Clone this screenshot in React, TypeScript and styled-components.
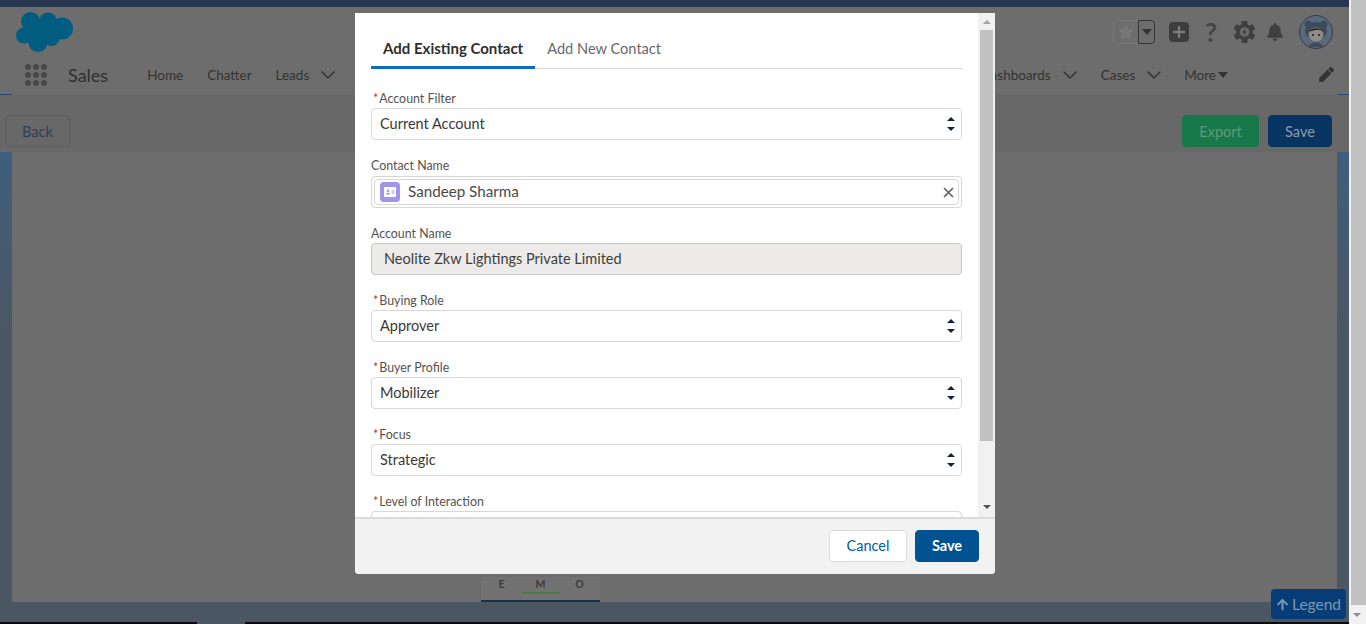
import React from 'react';
import styled, { createGlobalStyle } from 'styled-components';
import { ChevronDown } from 'lucide-react';
import { FaBell, FaPen, FaArrowUp } from 'react-icons/fa';

const FONT = `Lato, "Open Sans", "Liberation Sans", sans-serif`;

const GlobalStyle = createGlobalStyle`
  html, body {
    margin: 0;
    padding: 0;
    width: 1366px;
    height: 624px;
    overflow: hidden;
    font-family: ${FONT};
  }
  * { box-sizing: border-box; }
`;

const Page = styled.div`
  position: relative;
  width: 1366px;
  height: 624px;
  display: flex;
  overflow: hidden;
  background: #6e6d6d;
`;

const MainColumn = styled.div`
  width: 1349px;
  height: 624px;
  display: flex;
  flex-direction: column;
`;

const TopStrip = styled.div`
  height: 7px;
  background: #27364f;
`;

const Header = styled.header`
  height: 51px;
  display: flex;
  align-items: flex-start;
  justify-content: space-between;
  padding: 5px 16px 0 16px;
`;

const Logo = styled.svg`
  width: 57px;
  height: 40px;
  display: block;
`;

const HeaderTools = styled.div`
  display: flex;
  align-items: center;
  height: 40px;
`;

const FavouriteBox = styled.div`
  width: 42px;
  height: 24px;
  display: flex;
  border: 1px solid #7a7979;
  border-radius: 4px;
  margin-right: 14px;
`;

const FavouriteStar = styled.div`
  width: 24px;
  display: flex;
  align-items: center;
  justify-content: center;
`;

const FavouriteCaret = styled.div`
  flex: 1;
  display: flex;
  align-items: center;
  justify-content: center;
  border: 1px solid #333;
  border-radius: 0 4px 4px 0;
  margin: -1px -1px -1px 0;
  &::after {
    content: '';
    border-left: 5px solid transparent;
    border-right: 5px solid transparent;
    border-top: 6px solid #333;
  }
`;

const PlusBox = styled.div`
  width: 20px;
  height: 20px;
  border-radius: 4px;
  background: #3d3d3d;
  color: #7c7b7b;
  display: flex;
  align-items: center;
  justify-content: center;
  margin-right: 15px;
`;

const HelpMark = styled.span`
  width: 14px;
  margin-right: 16px;
  color: #454545;
  font-size: 26px;
  line-height: 26px;
  font-weight: 700;
  text-align: center;
`;

const ToolIcon = styled.span<{ $gap: number }>`
  display: flex;
  color: #3f3f3f;
  margin-right: ${(p) => p.$gap}px;
`;

const Avatar = styled.svg`
  width: 34px;
  height: 34px;
  display: block;
`;

const NavBar = styled.nav`
  height: 36px;
  display: flex;
  align-items: center;
  justify-content: space-between;
  padding: 0 15px 3px 25px;
  color: #333;
`;

const NavGroup = styled.div`
  display: flex;
  align-items: center;
`;

const Launcher = styled.div`
  display: grid;
  grid-template-columns: repeat(3, 6px);
  gap: 2px;
  margin-right: 21px;
`;

const LauncherDot = styled.span`
  width: 6px;
  height: 6px;
  border-radius: 50%;
  background: #484848;
`;

const AppName = styled.span`
  font-size: 18px;
  margin-right: 39px;
  color: #2f2f2f;
`;

const NavLink = styled.span<{ $gap: number }>`
  font-size: 13.5px;
  margin-right: ${(p) => p.$gap}px;
  color: #333;
`;

const NavChevron = styled(ChevronDown)<{ $gap: number }>`
  width: 24px;
  height: 24px;
  margin-right: ${(p) => p.$gap}px;
  color: #333;
`;

const MoreCaret = styled.span`
  margin-left: 2px;
  margin-right: 91px;
  border-left: 5px solid transparent;
  border-right: 5px solid transparent;
  border-top: 6px solid #333;
`;

const EditIcon = styled(FaPen)`
  width: 15px;
  height: 15px;
  color: #333;
`;

const AccentRow = styled.div`
  height: 1px;
  display: flex;
  justify-content: space-between;
`;

const AccentMark = styled.span`
  width: 12px;
  background: #2a4a70;
`;

const Toolbar = styled.div`
  height: 57px;
  background: #696868;
  display: flex;
  align-items: flex-end;
  justify-content: space-between;
  padding: 0 17px 5px 5px;
`;

const ToolbarGroup = styled.div`
  display: flex;
  gap: 9px;
`;

const PageButton = styled.div<{ $bg: string; $color: string; $width: number; $border: string }>`
  width: ${(p) => p.$width}px;
  height: 32px;
  border-radius: 4px;
  border: 1px solid ${(p) => p.$border};
  background: ${(p) => p.$bg};
  color: ${(p) => p.$color};
  font-size: 14.5px;
  display: flex;
  align-items: center;
  justify-content: center;
`;

const ContentFrame = styled.div`
  height: 450px;
  display: flex;
  background: linear-gradient(#3f5f7c, #4b5663 40%);
  padding: 0 12px;
`;

const ContentArea = styled.div`
  flex: 1;
  background: #6e6d6d;
  display: flex;
  align-items: flex-end;
  padding-left: 469px;
`;

const ScoreChip = styled.div`
  width: 119px;
  height: 25px;
  background: #737272;
  border-bottom: 2px solid #1a3049;
  display: flex;
  justify-content: space-between;
  padding: 0 1px;
`;

const ScoreCell = styled.span<{ $on?: boolean }>`
  width: 39px;
  height: 17px;
  font-size: 10.5px;
  font-weight: 700;
  color: #3c3c3c;
  text-align: center;
  line-height: 15px;
  border-bottom: 2px solid ${(p) => (p.$on ? '#4e7a43' : 'transparent')};
`;

const BottomBand = styled.div`
  height: 20px;
  background: #4b5663;
`;

const Legend = styled.div`
  position: absolute;
  left: 1271px;
  top: 589px;
  width: 75px;
  height: 30px;
  border-radius: 4px;
  background: #073d76;
  color: #7d97b3;
  font-size: 15.5px;
  display: flex;
  align-items: center;
  justify-content: center;
  gap: 3px;
`;

const TaskStrip = styled.div`
  height: 2px;
  background: #0c0c10;
  padding-left: 197px;
`;

const TaskMark = styled.div`
  width: 48px;
  height: 2px;
  background: #4b5663;
`;

const PageScrollbar = styled.div`
  width: 17px;
  height: 624px;
  display: flex;
  flex-direction: column;
  background: #f1f1f1;
  padding-left: 2px;
`;

const PageThumb = styled.div`
  height: 605px;
  background: #c1c1c1;
`;

const ScrollArrow = styled.span<{ $up?: boolean; $color: string }>`
  display: block;
  width: 0;
  height: 0;
  border-left: 4px solid transparent;
  border-right: 4px solid transparent;
  ${(p) =>
    p.$up
      ? `border-bottom: 4px solid ${p.$color};`
      : `border-top: 4px solid ${p.$color};`}
`;

const PageArrowSlot = styled.div`
  flex: 1;
  display: flex;
  align-items: center;
  justify-content: center;
  padding-right: 3px;
`;

const Modal = styled.div`
  position: absolute;
  left: 355px;
  top: 13px;
  width: 640px;
  height: 561px;
  background: #fff;
  border-radius: 0 0 4px 4px;
  display: flex;
  flex-direction: column;
  overflow: hidden;
`;

const ModalBody = styled.div`
  height: 504px;
  display: flex;
`;

const FormPane = styled.div`
  flex: 1;
  overflow: hidden;
  padding: 0 16px;
`;

const Tabs = styled.div`
  height: 56px;
  display: flex;
  align-items: flex-end;
  border-bottom: 1px solid #d8d7d6;
  margin-bottom: 20px;
`;

const Tab = styled.div<{ $active?: boolean }>`
  height: 37px;
  padding: 0 12px 2px;
  margin-bottom: -1px;
  font-size: ${(p) => (p.$active ? 15 : 14.6)}px;
  font-weight: ${(p) => (p.$active ? 700 : 400)};
  color: ${(p) => (p.$active ? '#2f2e2e' : '#696868')};
  border-bottom: 3px solid ${(p) => (p.$active ? '#0f6cbd' : 'transparent')};
  display: flex;
  align-items: center;
`;

const Field = styled.div`
  margin-bottom: 16px;
`;

const FieldLabel = styled.div<{ $tall?: boolean; $required?: boolean }>`
  height: ${(p) => (p.$tall ? 20 : 19)}px;
  font-size: 12.4px;
  color: #55534f;
  padding-left: ${(p) => (p.$required ? 2 : 0)}px;
  line-height: 20px;
`;

const Star = styled.span`
  color: #c23934;
  margin-right: 1px;
`;

const SelectBox = styled.div`
  position: relative;
  height: 32px;
  border: 1px solid #d8d7d6;
  border-radius: 4px;
  padding: 0 0 2px 8px;
  font-size: 14.5px;
  color: #3a3937;
  display: flex;
  align-items: center;
`;

const SelectCarets = styled.span`
  position: absolute;
  right: 6px;
  top: 8px;
  display: flex;
  flex-direction: column;
  gap: 6px;
`;

const ContactBox = styled.div`
  height: 32px;
  border: 1px solid #d8d7d6;
  border-radius: 4px;
  padding: 2px;
`;

const ContactInner = styled.div`
  height: 26px;
  border: 1px solid #d8d7d6;
  border-radius: 4px;
  padding: 0 4px 0 5px;
  display: flex;
  align-items: center;
  font-size: 15.2px;
  color: #4b4a48;
`;

const ContactIcon = styled.span`
  width: 20px;
  height: 20px;
  margin-right: 8px;
  border-radius: 4px;
  background: #a094ed;
  display: flex;
  align-items: center;
  justify-content: center;
`;

const ContactName = styled.span`
  flex: 1;
  padding-bottom: 2px;
`;

const ReadOnlyBox = styled.div`
  height: 32px;
  border: 1px solid #c9c7c5;
  border-radius: 4px;
  background: #ecebea;
  padding: 0 0 2px 12px;
  font-size: 14.5px;
  color: #3e3e3c;
  display: flex;
  align-items: center;
`;

const ModalScrollbar = styled.div`
  width: 17px;
  display: flex;
  flex-direction: column;
  align-items: center;
  background: #f1f1f1;
`;

const ArrowSlot = styled.div<{ $height: number }>`
  height: ${(p) => p.$height}px;
  display: flex;
  align-items: center;
  justify-content: center;
`;

const ModalThumb = styled.div`
  width: 13px;
  height: 411px;
  background: #c1c1c1;
`;

const ScrollSpacer = styled.div`
  flex: 1;
`;

const ModalFooter = styled.div`
  flex: 1;
  background: #f3f2f2;
  border-top: 2px solid #dddbda;
  display: flex;
  align-items: center;
  justify-content: flex-end;
  gap: 8px;
  padding: 0 16px 2px 0;
`;

const FooterButton = styled.div<{ $primary?: boolean }>`
  width: ${(p) => (p.$primary ? 64 : 78)}px;
  height: 32px;
  border-radius: 4px;
  border: 1px solid ${(p) => (p.$primary ? '#005290' : '#dddbda')};
  background: ${(p) => (p.$primary ? '#005290' : '#fff')};
  color: ${(p) => (p.$primary ? '#fff' : '#00609a')};
  font-size: 14.5px;
  font-weight: ${(p) => (p.$primary ? 700 : 400)};
  display: flex;
  align-items: center;
  justify-content: center;
`;

const selectFields = [
  { label: 'Buying Role', value: 'Approver' },
  { label: 'Buyer Profile', value: 'Mobilizer' },
  { label: 'Focus', value: 'Strategic' },
  { label: 'Level of Interaction', value: '' },
];

const Carets = () => (
  <SelectCarets>
    <ScrollArrow $up $color="#16223a" />
    <ScrollArrow $color="#16223a" />
  </SelectCarets>
);

const GearIcon = () => (
  <svg width="21" height="22" viewBox="0 0 21 22">
    {[0, 60, 120, 180, 240, 300].map((deg) => (
      <rect key={deg} x="7.5" y="0" width="6" height="5" rx="1" fill="currentColor" transform={`rotate(${deg} 10.500 11)`} />
    ))}
    <circle cx="10.500" cy="11" r="6.500" fill="none" stroke="currentColor" strokeWidth="3.500" />
    <path fill="currentColor" d="M11.500 7L8 11.800h2.200L9.500 15l3.500-4.800h-2.200z" />
  </svg>
);

const App: React.FC = () => (
  <Page>
    <GlobalStyle />
    <MainColumn>
      <TopStrip />
      <Header>
        <Logo viewBox="0 0 57 40">
          <g fill="#005c80">
            <circle cx="14.500" cy="9.500" r="9.500" />
            <circle cx="32" cy="9.500" r="9" />
            <circle cx="46" cy="16.500" r="11" />
            <circle cx="8" cy="23.500" r="8" />
            <circle cx="22" cy="30.500" r="9.500" />
            <circle cx="35.500" cy="26" r="8" />
            <rect x="12" y="9" width="32" height="18" />
          </g>
        </Logo>
        <HeaderTools>
          <FavouriteBox>
            <FavouriteStar>
              <svg width="16" height="16" viewBox="0 0 16 16">
                <path
                  d="M8 1.500l2 4.400 4.700.5-3.500 3.200 1 4.700L8 11.900l-4.200 2.400 1-4.700L1.300 6.400 6 5.900z"
                  fill="#767575"
                  stroke="#807f7f"
                />
              </svg>
            </FavouriteStar>
            <FavouriteCaret />
          </FavouriteBox>
          <PlusBox>
            <svg width="14" height="14" viewBox="0 0 14 14">
              <path d="M7 1v12M1 7h12" stroke="currentColor" strokeWidth="2.400" />
            </svg>
          </PlusBox>
          <HelpMark>?</HelpMark>
          <ToolIcon $gap={11}>
            <GearIcon />
          </ToolIcon>
          <ToolIcon $gap={15}>
            <FaBell size={18} />
          </ToolIcon>
          <Avatar viewBox="0 0 34 34">
            <circle cx="17" cy="17" r="16.500" fill="#5a6a7c" stroke="#333c47" />
            <circle cx="9" cy="9" r="3.500" fill="#3d4a59" />
            <circle cx="25" cy="9" r="3.500" fill="#3d4a59" />
            <ellipse cx="17" cy="16" rx="11" ry="9" fill="#3d4a59" />
            <ellipse cx="17" cy="19.500" rx="7.500" ry="7" fill="#8f8c88" />
            <path d="M9.500 17c2-5 13-5 15 0-3-2-4.500-2.500-7-2-3 .5-5.500.5-8 2z" fill="#262626" />
            <circle cx="14" cy="20" r="1.100" fill="#222" />
            <circle cx="20" cy="20" r="1.100" fill="#222" />
            <path d="M10 32c1-6 13-6 14 0z" fill="#3d4a59" />
          </Avatar>
        </HeaderTools>
      </Header>
      <NavBar>
        <NavGroup>
          <Launcher>
            {Array.from({ length: 9 }).map((_, i) => (
              <LauncherDot key={i} />
            ))}
          </Launcher>
          <AppName>Sales</AppName>
          <NavLink $gap={24}>Home</NavLink>
          <NavLink $gap={24}>Chatter</NavLink>
          <NavLink $gap={7}>Leads</NavLink>
          <NavChevron $gap={0} strokeWidth={1.5} />
        </NavGroup>
        <NavGroup>
          <NavLink $gap={7}>Dashboards</NavLink>
          <NavChevron $gap={19} strokeWidth={1.5} />
          <NavLink $gap={7}>Cases</NavLink>
          <NavChevron $gap={18} strokeWidth={1.5} />
          <NavLink $gap={0}>More</NavLink>
          <MoreCaret />
          <EditIcon />
        </NavGroup>
      </NavBar>
      <AccentRow>
        <AccentMark />
        <AccentMark />
      </AccentRow>
      <Toolbar>
        <PageButton $bg="transparent" $color="#2e3f55" $width={65} $border="#5f5e5e">
          Back
        </PageButton>
        <ToolbarGroup>
          <PageButton $bg="#17784a" $color="#5f9a7a" $width={77} $border="#17784a">
            Export
          </PageButton>
          <PageButton $bg="#073461" $color="#8a9db0" $width={64} $border="#073461">
            Save
          </PageButton>
        </ToolbarGroup>
      </Toolbar>
      <ContentFrame>
        <ContentArea>
          <ScoreChip>
            <ScoreCell>E</ScoreCell>
            <ScoreCell $on>M</ScoreCell>
            <ScoreCell>O</ScoreCell>
          </ScoreChip>
        </ContentArea>
      </ContentFrame>
      <BottomBand />
      <TaskStrip>
        <TaskMark />
      </TaskStrip>
    </MainColumn>
    <PageScrollbar>
      <PageThumb />
      <PageArrowSlot>
        <ScrollArrow $color="#8f8f8f" />
      </PageArrowSlot>
    </PageScrollbar>
    <Legend>
      <FaArrowUp size={13} />
      Legend
    </Legend>
    <Modal>
      <ModalBody>
        <FormPane>
          <Tabs>
            <Tab $active>Add Existing Contact</Tab>
            <Tab>Add New Contact</Tab>
          </Tabs>
          <Field>
            <FieldLabel $required>
              <Star>*</Star>Account Filter
            </FieldLabel>
            <SelectBox>
              Current Account
              <Carets />
            </SelectBox>
          </Field>
          <Field>
            <FieldLabel $tall>Contact Name</FieldLabel>
            <ContactBox>
              <ContactInner>
                <ContactIcon>
                  <svg width="12" height="10" viewBox="0 0 12 10">
                    <path
                      fill="#fff"
                      fillRule="evenodd"
                      d="M1 0h10a1 1 0 011 1v8a1 1 0 01-1 1H1a1 1 0 01-1-1V1a1 1 0 011-1zm3 2.500a1.300 1.300 0 100 2.600 1.300 1.300 0 000-2.600zM1.800 7.500h4.400c0-1.200-1-1.800-2.200-1.800s-2.200.6-2.200 1.800zM7.500 3.500v1h3v-1zm0 2v1h3v-1z"
                    />
                  </svg>
                </ContactIcon>
                <ContactName>Sandeep Sharma</ContactName>
                <svg width="11" height="11" viewBox="0 0 11 11">
                  <path d="M1 1l9 9M10 1l-9 9" stroke="#5f5e5c" strokeWidth="1.600" />
                </svg>
              </ContactInner>
            </ContactBox>
          </Field>
          <Field>
            <FieldLabel>Account Name</FieldLabel>
            <ReadOnlyBox>Neolite Zkw Lightings Private Limited</ReadOnlyBox>
          </Field>
          {selectFields.map((f) => (
            <Field key={f.label}>
              <FieldLabel $required>
                <Star>*</Star>
                {f.label}
              </FieldLabel>
              <SelectBox>
                {f.value}
                <Carets />
              </SelectBox>
            </Field>
          ))}
        </FormPane>
        <ModalScrollbar>
          <ArrowSlot $height={17}>
            <ScrollArrow $up $color="#a3a3a3" />
          </ArrowSlot>
          <ModalThumb />
          <ScrollSpacer />
          <ArrowSlot $height={20}>
            <ScrollArrow $color="#505050" />
          </ArrowSlot>
        </ModalScrollbar>
      </ModalBody>
      <ModalFooter>
        <FooterButton>Cancel</FooterButton>
        <FooterButton $primary>Save</FooterButton>
      </ModalFooter>
    </Modal>
  </Page>
);

export default App;
